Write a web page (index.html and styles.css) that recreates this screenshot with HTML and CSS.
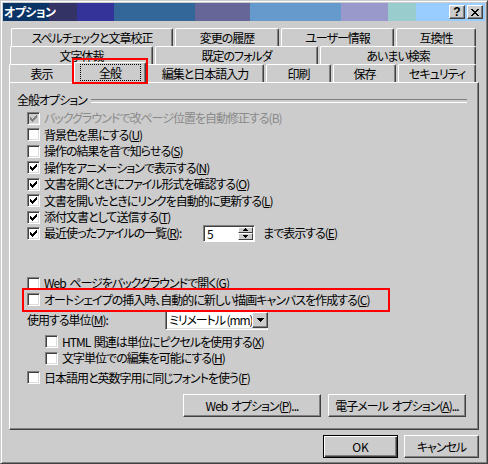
FILE: index.html
```html
<!DOCTYPE html>
<html lang="ja">
<head>
<meta charset="utf-8">
<title>オプション</title>
<link rel="stylesheet" href="styles.css">
</head>
<body>
<div class="window">
  <div class="titlebar">
    <span class="title">オプション</span>
    <div class="caption-btns">
      <span class="cbtn help">?</span>
      <span class="cbtn"><svg width="8" height="7" viewBox="0 0 8 7" shape-rendering="crispEdges"><path d="M0 0h2v1H0zM6 0h2v1H6zM1 1h2v1H1zM5 1h2v1H5zM2 2h4v1H2zM3 3h2v1H3zM2 4h4v1H2zM1 5h2v1H1zM5 5h2v1H5zM0 6h2v1H0zM6 6h2v1H6z" fill="#000"/></svg></span>
    </div>
  </div>
  <div class="body">
    <div class="tabs">
      <div class="tabrow row1">
        <div class="tab">スペルチェックと文章校正</div>
        <div class="tab">変更の履歴</div>
        <div class="tab">ユーザー情報</div>
        <div class="tab">互換性</div>
      </div>
      <div class="tabrow row2">
        <div class="tab">文字体裁</div>
        <div class="tab">既定のフォルダ</div>
        <div class="tab">あいまい検索</div>
      </div>
      <div class="tabrow row3">
        <div class="tab">表示</div>
        <div class="tab active"><span class="focus">全般</span></div>
        <div class="tab">編集と日本語入力</div>
        <div class="tab">印刷</div>
        <div class="tab">保存</div>
        <div class="tab">セキュリティ</div>
      </div>
    </div>
    <div class="panel">
      <div class="group-head"><span>全般オプション</span></div>
      <div class="opts">
        <div class="opt disabled"><span class="cb checked"><svg width="7" height="7" viewBox="0 0 7 7" shape-rendering="crispEdges"><path d="M0 2h1v3H0zM1 3h1v3H1zM2 4h1v3H2zM3 3h1v3H3zM4 2h1v3H4zM5 1h1v3H5zM6 0h1v3H6z"/></svg></span>バックグラウンドで改ページ位置を自動修正する(B)</div>
        <div class="opt"><span class="cb"></span>背景色を黒にする(<u>U</u>)</div>
        <div class="opt"><span class="cb"></span>操作の結果を音で知らせる(<u>S</u>)</div>
        <div class="opt"><span class="cb checked"><svg width="7" height="7" viewBox="0 0 7 7" shape-rendering="crispEdges"><path d="M0 2h1v3H0zM1 3h1v3H1zM2 4h1v3H2zM3 3h1v3H3zM4 2h1v3H4zM5 1h1v3H5zM6 0h1v3H6z"/></svg></span>操作をアニメーションで表示する(<u>N</u>)</div>
        <div class="opt"><span class="cb checked"><svg width="7" height="7" viewBox="0 0 7 7" shape-rendering="crispEdges"><path d="M0 2h1v3H0zM1 3h1v3H1zM2 4h1v3H2zM3 3h1v3H3zM4 2h1v3H4zM5 1h1v3H5zM6 0h1v3H6z"/></svg></span>文書を開くときにファイル形式を確認する(<u>O</u>)</div>
        <div class="opt"><span class="cb checked"><svg width="7" height="7" viewBox="0 0 7 7" shape-rendering="crispEdges"><path d="M0 2h1v3H0zM1 3h1v3H1zM2 4h1v3H2zM3 3h1v3H3zM4 2h1v3H4zM5 1h1v3H5zM6 0h1v3H6z"/></svg></span>文書を開いたときにリンクを自動的に更新する(<u>L</u>)</div>
        <div class="opt"><span class="cb checked"><svg width="7" height="7" viewBox="0 0 7 7" shape-rendering="crispEdges"><path d="M0 2h1v3H0zM1 3h1v3H1zM2 4h1v3H2zM3 3h1v3H3zM4 2h1v3H4zM5 1h1v3H5zM6 0h1v3H6z"/></svg></span>添付文書として送信する(<u>T</u>)</div>
        <div class="opt recent"><span class="cb checked"><svg width="7" height="7" viewBox="0 0 7 7" shape-rendering="crispEdges"><path d="M0 2h1v3H0zM1 3h1v3H1zM2 4h1v3H2zM3 3h1v3H3zM4 2h1v3H4zM5 1h1v3H5zM6 0h1v3H6z"/></svg></span><span class="recent-label">最近使ったファイルの一覧(<u>R</u>):</span>
          <span class="spin"><span class="spin-field">5</span><span class="spin-btns"><span class="sbtn"><svg width="5" height="3" viewBox="0 0 5 3" shape-rendering="crispEdges"><path d="M2 0h1v1h1v1h1v1H0V2h1V1h1z"/></svg></span><span class="sbtn"><svg width="5" height="3" viewBox="0 0 5 3" shape-rendering="crispEdges"><path d="M0 0h5v1H4v1H3v1H2V2H1V1H0z"/></svg></span></span></span>
          <span class="after-spin">まで表示する(<u>E</u>)</span>
        </div>
        <div class="opt web"><span class="cb"></span>Web ページをバックグラウンドで開く(<u>G</u>)</div>
        <div class="opt hl"><span class="cb"></span>オートシェイプの挿入時、自動的に新しい描画キャンバスを作成する(<u>C</u>)</div>
        <div class="unit-row"><span class="unit-label">使用する単位(<u>M</u>):</span>
          <span class="combo"><span class="combo-field">ミリメートル (mm)</span><span class="combo-btn"><svg width="7" height="4" viewBox="0 0 7 4" shape-rendering="crispEdges"><path d="M0 0h7v1H6v1H5v1H4v1H3V3H2V2H1V1H0z"/></svg></span></span>
        </div>
        <div class="opt sub first-sub"><span class="cb"></span>HTML 関連は単位にピクセルを使用する(<u>X</u>)</div>
        <div class="opt sub"><span class="cb"></span>文字単位での編集を可能にする(<u>H</u>)</div>
        <div class="opt font-row"><span class="cb"></span>日本語用と英数字用に同じフォントを使う(<u>F</u>)</div>
      </div>
      <div class="panel-btns">
        <span class="btn wide">Web オプション(<u>P</u>)...</span>
        <span class="btn wide">電子メール オプション(<u>A</u>)...</span>
      </div>
    </div>
    <div class="footer">
      <span class="btn default">OK</span>
      <span class="btn">キャンセル</span>
    </div>
  </div>
</div>
</body>
</html>
```

FILE: styles.css
```css
* { box-sizing: border-box; }

body {
  margin: 0;
  width: 488px;
  height: 464px;
  overflow: hidden;
  font-family: "Noto Sans CJK JP", sans-serif;
  font-size: 12px;
  font-feature-settings: "palt";
  letter-spacing: -1px;
  word-spacing: 2px;
  color: #000;
}

u { text-decoration: underline; text-underline-offset: 1px; }

.window {
  width: 488px;
  height: 464px;
  background: #cccccc;
  border: 1px solid;
  border-color: #cccccc #404040 #404040 #cccccc;
  box-shadow: inset 1px 1px #ffffff, inset -1px -1px #808080;
  padding: 2px;
  display: flex;
  flex-direction: column;
}

.titlebar {
  height: 18px;
  flex: none;
  display: flex;
  align-items: center;
  justify-content: space-between;
  padding: 0 2px 0 1px;
  background: linear-gradient(to right,
    #0a3366 0 46px, #333366 46px 74px, #333399 74px 111px,
    #336699 111px 192px, #666699 192px 247px, #6699cc 247px 338px,
    #9999cc 338px 385px, #99cccc 385px 413px, #99ccff 413px);
}

.title {
  color: #fff;
  font-weight: bold;
  font-size: 12px;
  line-height: 18px;
  letter-spacing: -0.6px;
}

.caption-btns { display: flex; gap: 2px; }

.cbtn {
  width: 16px;
  height: 14px;
  background: #cccccc;
  border: 1px solid;
  border-color: #ffffff #404040 #404040 #ffffff;
  box-shadow: inset -1px -1px #808080;
  display: flex;
  align-items: center;
  justify-content: center;
}

.help {
  font-family: "Liberation Sans", sans-serif;
  font-weight: bold;
  font-size: 12px;
  line-height: 12px;
  letter-spacing: 0;
}

.body {
  flex: 1;
  display: flex;
  flex-direction: column;
  padding: 7px 6px 0 6px;
}

.tabs { display: flex; flex-direction: column; }

.tabrow { display: grid; height: 18px; column-gap: 2px; }
.row1 { grid-template-columns: 162px 104px 113px 80px; margin-left: 2px; }
.row2 { grid-template-columns: 143px 163px 156px; margin-left: 1px; }
.row3 { grid-template-columns: 65px 68px 118px 65px 63px 78px; }

.tab {
  background: #cccccc;
  border-top: 1px solid #ffffff;
  border-left: 1px solid #ffffff;
  border-right: 1px solid #404040;
  box-shadow: inset -1px 0 #808080;
  border-radius: 2px 2px 0 0;
  display: flex;
  align-items: center;
  justify-content: center;
  line-height: 14px;
  white-space: nowrap;
}

.tab.active {
  margin: -2px -2px -1px;
  position: relative;
  z-index: 2;
  align-items: flex-start;
  padding-top: 2px;
}

.tab.active::after {
  content: "";
  position: absolute;
  left: -3px;
  right: -3px;
  top: -5px;
  bottom: -1px;
  border: 2px solid #ff0000;
}

.focus {
  outline: 1px dotted #000;
  outline-offset: 0;
  width: 59px;
  height: 15px;
  display: flex;
  align-items: center;
  justify-content: center;
}

.panel {
  height: 348px;
  flex: none;
  border: 1px solid;
  border-color: #ffffff #404040 #404040 #ffffff;
  box-shadow: inset -1px -1px #808080;
  padding: 10px 11px 0 7px;
  display: flex;
  flex-direction: column;
}

.group-head {
  height: 14px;
  display: flex;
  align-items: center;
  line-height: 14px;
}
.group-head span { margin-right: 4px; }
.group-head::after {
  content: "";
  flex: 1;
  height: 2px;
  border-top: 1px solid #808080;
  border-bottom: 1px solid #ffffff;
  margin-top: 1px;
}

.opts {
  margin-top: 3px;
  margin-left: 10px;
  display: flex;
  flex-direction: column;
}

.opt {
  height: 16.5px;
  display: flex;
  align-items: center;
  white-space: nowrap;
  line-height: 14px;
}

.cb {
  width: 13px;
  height: 13px;
  flex: none;
  margin-right: 4px;
  background: #ffffff;
  border: 1px solid;
  border-color: #808080 #ffffff #ffffff #808080;
  box-shadow: inset 1px 1px #404040, inset -1px -1px #dcdcdc;
  display: flex;
  align-items: center;
  justify-content: center;
}
.cb svg { fill: #000; }

.disabled { color: #8a8a8a; }
.disabled .cb { background: #cccccc; }
.disabled .cb svg { fill: #808080; }

.recent { height: 16px; margin-top: -0.5px; }
.recent-label { width: 159px; flex: none; }

.spin {
  width: 52px;
  height: 17px;
  flex: none;
  display: flex;
  border: 1px solid;
  border-color: #808080 #ffffff #ffffff #808080;
  box-shadow: inset 1px 1px #404040;
  padding: 1px;
  background: #ffffff;
}
.spin-field {
  flex: 1;
  padding-left: 2px;
  line-height: 13px;
}
.spin-btns {
  width: 15px;
  display: flex;
  flex-direction: column;
}
.sbtn {
  flex: 1;
  background: #cccccc;
  border: 1px solid;
  border-color: #ffffff #404040 #404040 #ffffff;
  display: flex;
  align-items: center;
  justify-content: center;
}
.after-spin { margin-left: 8px; }

.web { margin-top: 34px; }

.hl { position: relative; }
.hl::after {
  content: "";
  position: absolute;
  left: -5px;
  top: -4px;
  width: 364px;
  height: 20px;
  border: 2px solid #ff0000;
}

.unit-row {
  height: 20px;
  margin-top: 1.5px;
  display: flex;
  align-items: center;
  white-space: nowrap;
}
.unit-label { width: 138px; flex: none; }

.combo {
  width: 103px;
  height: 20px;
  display: flex;
  align-items: center;
  border: 1px solid;
  border-color: #808080 #ffffff #ffffff #808080;
  box-shadow: inset 1px 1px #404040, inset -1px -1px #dcdcdc;
  padding: 2px;
  background: #ffffff;
}
.combo-field {
  flex: 1;
  padding-left: 1px;
  line-height: 14px;
  white-space: nowrap;
  word-spacing: 0;
  letter-spacing: -1.1px;
}
.combo-btn {
  width: 16px;
  height: 16px;
  flex: none;
  background: #cccccc;
  border: 1px solid;
  border-color: #ffffff #404040 #404040 #ffffff;
  box-shadow: inset -1px -1px #808080;
  display: flex;
  align-items: center;
  justify-content: center;
}

.sub { margin-left: 18px; }
.first-sub { margin-top: 4px; }
.font-row { margin-top: 3px; }

.panel-btns {
  display: flex;
  justify-content: flex-end;
  gap: 7px;
  margin-top: 8px;
  margin-right: 1px;
}

.btn {
  height: 23px;
  width: 75px;
  background: #cccccc;
  border: 1px solid;
  border-color: #ffffff #404040 #404040 #ffffff;
  box-shadow: inset -1px -1px #808080;
  display: flex;
  align-items: center;
  justify-content: center;
  white-space: nowrap;
  line-height: 14px;
}
.btn.wide { width: 138px; }

.btn.default {
  letter-spacing: 0;
  border-color: #000;
  box-shadow: inset 1px 1px #ffffff, inset -1px -1px #404040, inset -2px -2px #808080;
}

.footer {
  display: flex;
  justify-content: flex-end;
  gap: 6px;
  margin-top: 5px;
}
```
